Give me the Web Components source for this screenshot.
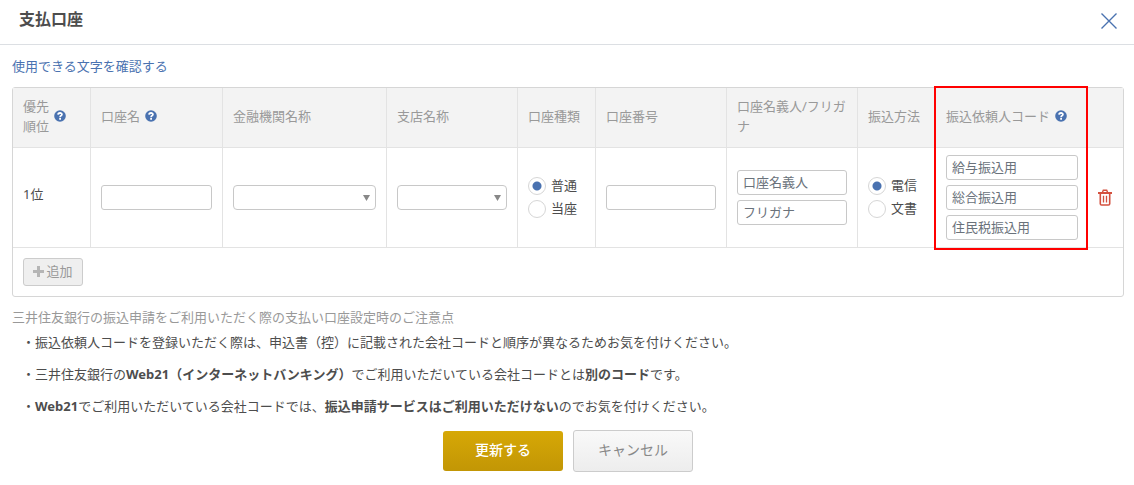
<!DOCTYPE html>
<html lang="ja">
<head>
<meta charset="utf-8">
<meta name="viewport" content="width=device-width, initial-scale=1">
<title>支払口座</title>
<style>
  body {
    margin: 0;
    background: #fff;
    color: #4d4d4d;
    font-family: "Noto Sans", "Noto Sans CJK JP", sans-serif;
    font-size: 13px;
    line-height: 20px;
    --accent: #4a72b0;
    --muted: #999;
    --line: #e3e3e3;
    --field-line: #c8c8c8;
  }
  a {
    color: var(--accent);
    text-decoration: none;
  }
</style>
</head>
<body>
<modal-dialog heading="支払口座">
  <a href="#characters">使用できる文字を確認する</a>
  <account-table></account-table>
  <account-notes>
    <span slot="title">三井住友銀行の振込申請をご利用いただく際の支払い口座設定時のご注意点</span>
    <div>・振込依頼人コードを登録いただく際は、申込書（控）に記載された会社コードと順序が異なるためお気を付けください。</div>
    <div>・三井住友銀行の<b>Web21（インターネットバンキング）</b>でご利用いただいている会社コードとは<b>別のコード</b>です。</div>
    <div>・<b>Web21</b>でご利用いただいている会社コードでは、<b>振込申請サービスはご利用いただけない</b>のでお気を付けください。</div>
  </account-notes>
  <action-button slot="actions" variant="primary">更新する</action-button>
  <action-button slot="actions">キャンセル</action-button>
</modal-dialog>

<script>
class ModalDialog extends HTMLElement {
  constructor() {
    super();
    const shadow = this.attachShadow({ mode: 'open' });
    shadow.innerHTML = `
      <style>
        :host {
          display: block;
        }
        header {
          display: flex;
          align-items: center;
          justify-content: space-between;
          padding: 9px 16px 11px 19px;
          border-bottom: 1px solid #dcdfe3;
        }
        h1 {
          margin: 0 0 4px;
          font-size: 16px;
          line-height: 20px;
        }
        .close {
          display: flex;
          padding: 3px 0;
          border: 0;
          background: none;
          cursor: pointer;
        }
        .close svg {
          width: 18px;
          height: 18px;
          stroke: var(--accent);
          stroke-width: 1.4;
        }
        .body {
          display: flex;
          flex-direction: column;
          gap: 11px;
          padding: 11px 10px 0 12px;
        }
        footer {
          display: flex;
          align-items: center;
          justify-content: center;
          gap: 10px;
          padding: 14px 10px 12px 12px;
        }
      </style>
      <header>
        <h1></h1>
        <button class="close" type="button" aria-label="閉じる">
          <svg viewBox="0 0 18 18" fill="none"><path d="M1.500 1.500l15 15M16.500 1.500l-15 15"/></svg>
        </button>
      </header>
      <div class="body"><slot></slot></div>
      <footer><slot name="actions"></slot></footer>
    `;
  }

  connectedCallback() {
    this.shadowRoot.querySelector('h1').textContent = this.getAttribute('heading');
  }
}

class HelpMark extends HTMLElement {
  constructor() {
    super();
    const shadow = this.attachShadow({ mode: 'open' });
    shadow.innerHTML = `
      <style>
        :host {
          display: block;
          flex: none;
        }
        svg {
          display: block;
          width: 12px;
          height: 12px;
        }
        circle {
          fill: var(--accent);
        }
        path {
          fill: none;
          stroke: #fff;
          stroke-width: 1.8;
        }
      </style>
      <svg viewBox="0 0 12 12" role="img" aria-label="ヘルプ">
        <circle cx="6" cy="6" r="5.8"/>
        <path d="M4 4.700C4.200 2.400 8 2.500 7.900 4.500C7.800 5.700 6.100 5.600 6.100 7.200M6.100 8.100V9.800"/>
      </svg>
    `;
  }
}

class TextField extends HTMLElement {
  constructor() {
    super();
    const shadow = this.attachShadow({ mode: 'open' });
    shadow.innerHTML = `
      <style>
        :host {
          display: block;
        }
        input {
          display: block;
          box-sizing: border-box;
          width: 100%;
          height: 25px;
          padding: 0 5px 2px;
          border: 1px solid var(--field-line);
          border-radius: 3px;
          background: #fff;
          color: inherit;
          font: inherit;
        }
        input::placeholder {
          color: #6a727b;
          opacity: 1;
        }
      </style>
      <input type="text">
    `;
  }

  connectedCallback() {
    const input = this.shadowRoot.querySelector('input');
    input.placeholder = this.getAttribute('placeholder') || '';
    input.setAttribute('aria-label', this.getAttribute('label') || input.placeholder);
  }
}

class SelectField extends HTMLElement {
  constructor() {
    super();
    const shadow = this.attachShadow({ mode: 'open' });
    shadow.innerHTML = `
      <style>
        :host {
          display: grid;
          align-items: center;
        }
        select,
        svg {
          grid-area: 1 / 1;
        }
        select {
          appearance: none;
          box-sizing: border-box;
          width: 100%;
          height: 25px;
          padding: 0 22px 0 5px;
          border: 1px solid var(--field-line);
          border-radius: 4px;
          background: #fff;
          color: inherit;
          font: inherit;
        }
        svg {
          justify-self: end;
          width: 7px;
          height: 6px;
          margin-right: 6px;
          fill: #888;
          pointer-events: none;
          z-index: 1;
        }
      </style>
      <select><option value=""></option></select>
      <svg viewBox="0 0 7 6"><path d="M0 0h7L3.500 6z"/></svg>
    `;
  }

  connectedCallback() {
    this.shadowRoot.querySelector('select').setAttribute('aria-label', this.getAttribute('label'));
  }
}

class RadioChoices extends HTMLElement {
  constructor() {
    super();
    const shadow = this.attachShadow({ mode: 'open' });
    shadow.innerHTML = `
      <style>
        :host {
          display: flex;
          flex-direction: column;
          gap: 3px;
        }
        label {
          display: flex;
          align-items: center;
          gap: 5px;
          height: 20px;
          white-space: nowrap;
        }
        span {
          padding-bottom: 2px;
        }
        input {
          appearance: none;
          box-sizing: border-box;
          flex: none;
          width: 18px;
          height: 18px;
          margin: 0;
          border: 1px solid #d6d6d6;
          border-radius: 50%;
          background: #fff;
        }
        input:checked {
          background: radial-gradient(circle, var(--accent) 4px, #fff 5px);
        }
      </style>
    `;
  }

  connectedCallback() {
    // the first option is the default one
    this.getAttribute('options').split(',').forEach((text, i) => {
      const label = document.createElement('label');
      const input = document.createElement('input');
      const span = document.createElement('span');
      input.type = 'radio';
      input.name = 'choice';
      input.checked = i === 0;
      span.textContent = text;
      label.append(input, span);
      this.shadowRoot.appendChild(label);
    });
  }
}

class ActionButton extends HTMLElement {
  constructor() {
    super();
    const shadow = this.attachShadow({ mode: 'open' });
    shadow.innerHTML = `
      <style>
        :host {
          display: block;
        }
        button {
          box-sizing: border-box;
          width: 120px;
          height: 42px;
          padding: 0 0 2px;
          border: 1px solid #ccc;
          border-radius: 3px;
          background: linear-gradient(#f9f9f9, #ededed);
          color: #888;
          font: inherit;
          font-size: 14px;
          cursor: pointer;
        }
        :host([variant="primary"]) button {
          height: 40px;
          border: 0;
          background: linear-gradient(#d6a806, #c29605);
          color: #fff;
          font-weight: 500;
        }
      </style>
      <button type="button"><slot></slot></button>
    `;
  }
}

class AccountTable extends HTMLElement {
  constructor() {
    super();
    const shadow = this.attachShadow({ mode: 'open' });
    shadow.innerHTML = `
      <style>
        :host {
          display: block;
          border: 1px solid #d6d6d6;
          border-radius: 3px;
        }
        .grid {
          position: relative;
        }
        table {
          width: 100%;
          table-layout: fixed;
          border-collapse: separate;
          border-spacing: 0;
        }
        .w-choice { width: 78px; }
        .w-name { width: 132px; }
        .w-field { width: 131px; }
        .w-code { width: 151px; }
        .w-delete { width: 36px; }
        th,
        td {
          box-sizing: border-box;
          border-right: 1px solid var(--line);
          border-bottom: 1px solid var(--line);
          text-align: left;
          vertical-align: middle;
        }
        th {
          height: 60px;
          padding: 8px 10px 11px;
          background: #f3f3f3;
          color: var(--muted);
          font-weight: normal;
        }
        td {
          padding: 7px 10px;
        }
        .codes {
          padding-right: 8px;
        }
        th:last-child,
        td:last-child {
          padding: 0;
          border-right: 0;
        }
        .with-help {
          display: flex;
          align-items: center;
          gap: 5px;
        }
        .rank {
          padding-bottom: 15px;
        }
        .stack {
          display: flex;
          flex-direction: column;
          gap: 5px;
        }
        .highlight {
          position: absolute;
          top: -2px;
          right: 35px;
          bottom: -2px;
          width: 154px;
          box-sizing: border-box;
          border: 2px solid #f00;
          pointer-events: none;
        }
        .delete {
          display: flex;
          margin: 0 auto;
          padding: 0;
          border: 0;
          background: none;
          cursor: pointer;
        }
        .delete svg {
          width: 14px;
          height: 17px;
          fill: none;
          stroke: #d4513f;
        }
        .foot {
          padding: 10px;
        }
        .add {
          display: flex;
          align-items: center;
          justify-content: center;
          gap: 2px;
          box-sizing: border-box;
          width: 60px;
          height: 28px;
          padding: 0 0 2px;
          border: 1px solid #ccc;
          border-radius: 3px;
          background: #efefef;
          color: var(--muted);
          font: inherit;
        }
        .add svg {
          width: 11px;
          height: 11px;
          fill: #b5b5b5;
        }
      </style>
      <div class="grid">
        <table>
          <colgroup>
            <col class="w-choice">
            <col class="w-name">
            <col>
            <col class="w-field">
            <col class="w-choice">
            <col class="w-field">
            <col class="w-field">
            <col class="w-choice">
            <col class="w-code">
            <col class="w-delete">
          </colgroup>
          <thead>
            <tr>
              <th><div class="with-help"><span>優先<br>順位</span><help-mark></help-mark></div></th>
              <th><div class="with-help">口座名<help-mark></help-mark></div></th>
              <th>金融機関名称</th>
              <th>支店名称</th>
              <th>口座種類</th>
              <th>口座番号</th>
              <th>口座名義人/フリガナ</th>
              <th>振込方法</th>
              <th><div class="with-help">振込依頼人コード<help-mark></help-mark></div></th>
              <th></th>
            </tr>
          </thead>
          <tbody>
            <tr>
              <td class="rank">1位</td>
              <td><text-field label="口座名"></text-field></td>
              <td><select-field label="金融機関名称"></select-field></td>
              <td><select-field label="支店名称"></select-field></td>
              <td><radio-choices options="普通,当座"></radio-choices></td>
              <td><text-field label="口座番号"></text-field></td>
              <td>
                <div class="stack">
                  <text-field placeholder="口座名義人"></text-field>
                  <text-field placeholder="フリガナ"></text-field>
                </div>
              </td>
              <td><radio-choices options="電信,文書"></radio-choices></td>
              <td class="codes">
                <div class="stack">
                  <text-field placeholder="給与振込用"></text-field>
                  <text-field placeholder="総合振込用"></text-field>
                  <text-field placeholder="住民税振込用"></text-field>
                </div>
              </td>
              <td>
                <button class="delete" type="button" aria-label="削除">
                  <svg viewBox="0 0 14 17">
                    <path stroke-width="2" d="M0 4h14"/>
                    <path stroke-width="1.4" d="M4.500 3.200L5.300 1.200h3.400l.8 2"/>
                    <path stroke-width="1.6" d="M2.300 4.500v10.200q0 1.300 1.300 1.300h6.800q1.300 0 1.300-1.300V4.500"/>
                    <path stroke-width="1.3" d="M5.500 6.800v6.700M8.500 6.800v6.700"/>
                  </svg>
                </button>
              </td>
            </tr>
          </tbody>
        </table>
        <div class="highlight"></div>
      </div>
      <div class="foot">
        <button class="add" type="button">
          <svg viewBox="0 0 11 11"><path d="M4 0h3v4h4v3H7v4H4V7H0V4h4z"/></svg>追加
        </button>
      </div>
    `;
  }
}

class AccountNotes extends HTMLElement {
  constructor() {
    super();
    const shadow = this.attachShadow({ mode: 'open' });
    shadow.innerHTML = `
      <style>
        :host {
          display: block;
        }
        .title {
          color: var(--muted);
          line-height: 18px;
        }
        .items {
          display: flex;
          flex-direction: column;
          gap: 12px;
          padding: 6px 10px 0;
        }
      </style>
      <div class="title"><slot name="title"></slot></div>
      <div class="items"><slot></slot></div>
    `;
  }
}

customElements.define('help-mark', HelpMark);
customElements.define('text-field', TextField);
customElements.define('select-field', SelectField);
customElements.define('radio-choices', RadioChoices);
customElements.define('action-button', ActionButton);
customElements.define('account-table', AccountTable);
customElements.define('account-notes', AccountNotes);
customElements.define('modal-dialog', ModalDialog);
</script>
</body>
</html>
